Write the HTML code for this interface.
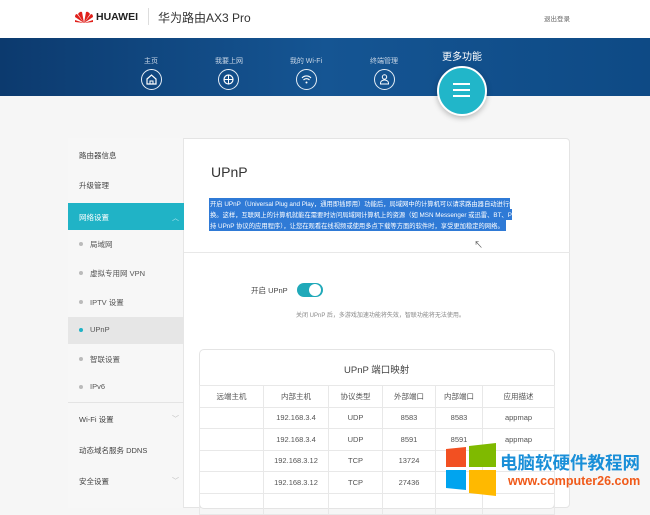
<!DOCTYPE html><html><head><meta charset="utf-8"><style>
*{margin:0;padding:0;box-sizing:border-box}
body{width:650px;height:501px;overflow:hidden;background:#f6f6f6;font-family:"Liberation Sans","Noto Sans CJK SC",sans-serif;color:#333;position:relative}
.a{position:absolute;white-space:nowrap}
.hdr{position:absolute;left:0;top:0;width:650px;height:38px;background:#fff}
.band{position:absolute;left:0;top:38px;width:650px;height:58px;background:linear-gradient(90deg,#0c3a6e,#155593 50%,#0e4a85)}
.nav{position:absolute;top:56px;font-size:7px;color:#c8d6e6;text-align:center;width:40px}
.ic{position:absolute;top:69px;width:21px;height:21px;border:1.3px solid #e6eef6;border-radius:50%}
.card{position:absolute;left:68px;top:138px;width:502px;height:370px;background:#fff;border:1px solid #e4e4e4;border-radius:4px}
.side{position:absolute;left:68px;top:138px;width:116px;height:370px;background:#f7f7f7;border-right:1px solid #e6e6e6}
.si{position:absolute;left:79px;font-size:7.5px;color:#444}
.sub{position:absolute;left:90px;font-size:7.5px;color:#555}
.dot{position:absolute;left:79px;width:4px;height:4px;border-radius:50%;background:#bbb}
table{position:absolute;left:199px;top:385px;border-collapse:collapse;font-size:7.5px;color:#555}
td{border:1px solid #e8e8e8;height:21.5px;text-align:center}
</style></head><body>
<div class="hdr"></div>
<svg class="a" style="left:74px;top:10px" width="20" height="14" viewBox="0 0 20 14"><g fill="#e0201b"><path d="M10 13 L4 4 Q6 1 8 2Z"/><path d="M10 13 L16 4 Q14 1 12 2Z"/><path d="M10 13 L1 7 Q1 4 3 4Z"/><path d="M10 13 L19 7 Q19 4 17 4Z"/><path d="M10 13 L1 10 L1 12Z"/><path d="M10 13 L19 10 L19 12Z"/></g></svg>
<div class="a" style="left:96px;top:11px;font-size:10.5px;font-weight:bold;color:#222">HUAWEI</div>
<div class="a" style="left:148px;top:8px;width:1px;height:17px;background:#ddd"></div>
<div class="a" style="left:158px;top:9px;font-size:12px;color:#333">华为路由AX3 Pro</div>
<div class="a" style="left:544px;top:13px;font-size:6.5px;color:#666">退出登录</div>
<div class="band"></div>
<div class="nav" style="left:131px">主页</div>
<div class="nav" style="left:209px">我要上网</div>
<div class="nav" style="left:286px">我的 Wi-Fi</div>
<div class="nav" style="left:364px">终端管理</div>
<div class="a" style="left:442px;top:48px;font-size:10px;color:#fff">更多功能</div>
<div class="ic" style="left:141px"><svg width="19" height="19" viewBox="0 0 19 19"><path d="M5 9 L9.5 5 L14 9 V14 H5Z" fill="none" stroke="#fff" stroke-width="1.2"/><path d="M8 14v-3h3v3" fill="none" stroke="#fff" stroke-width="1"/></svg></div>
<div class="ic" style="left:218px"><svg width="19" height="19" viewBox="0 0 19 19"><circle cx="9.5" cy="9.5" r="4.5" fill="none" stroke="#fff" stroke-width="1.2"/><path d="M5 9.5h9M9.5 5v9" stroke="#fff"/></svg></div>
<div class="ic" style="left:296px"><svg width="19" height="19" viewBox="0 0 19 19"><path d="M5 8a6 6 0 0 1 9 0M6.5 10a4 4 0 0 1 6 0" fill="none" stroke="#fff" stroke-width="1.1"/><circle cx="9.5" cy="12.5" r="1" fill="#fff"/></svg></div>
<div class="ic" style="left:374px"><svg width="19" height="19" viewBox="0 0 19 19"><circle cx="9.5" cy="7" r="2.2" fill="none" stroke="#fff"/><path d="M5.5 14v-1a4 3 0 0 1 8 0v1z" fill="none" stroke="#fff"/></svg></div>
<div class="a" style="left:437px;top:66px;width:50px;height:50px;border-radius:50%;background:#21b6c9;border:2px solid #fff;box-shadow:0 2px 6px rgba(0,0,0,.25)"></div>
<div class="a" style="left:453px;top:83px;width:17px;height:2px;background:#fff;box-shadow:0 6px 0 #fff,0 12px 0 #fff"></div>
<div class="card"></div>
<div class="side"></div>
<div class="si" style="top:150px">路由器信息</div>
<div class="si" style="top:180px">升级管理</div>
<div class="a" style="left:68px;top:203px;width:116px;height:27px;background:#20b3c6"></div>
<div class="si" style="top:212px;color:#fff">网络设置</div>
<div class="a" style="left:172px;top:213px;font-size:7px;color:#bfeaf0">︿</div>
<div class="dot" style="top:242px"></div><div class="sub" style="top:239px">局域网</div>
<div class="dot" style="top:271px"></div><div class="sub" style="top:268px">虚拟专用网 VPN</div>
<div class="dot" style="top:300px"></div><div class="sub" style="top:297px">IPTV 设置</div>
<div class="a" style="left:68px;top:317px;width:116px;height:27px;background:#e6e6e6"></div>
<div class="dot" style="top:328px;background:#20b3c6"></div><div class="sub" style="top:325px">UPnP</div>
<div class="dot" style="top:357px"></div><div class="sub" style="top:354px">智联设置</div>
<div class="dot" style="top:385px"></div><div class="sub" style="top:382px">IPv6</div>
<div class="a" style="left:68px;top:402px;width:116px;height:1px;background:#e4e4e4"></div>
<div class="si" style="top:414px">Wi-Fi 设置</div><div class="a" style="left:172px;top:414px;font-size:7px;color:#bbb">﹀</div>
<div class="si" style="top:445px">动态域名服务 DDNS</div>
<div class="si" style="top:476px">安全设置</div><div class="a" style="left:172px;top:476px;font-size:7px;color:#bbb">﹀</div>
<div class="a" style="left:211px;top:164px;font-size:14px;color:#333">UPnP</div>
<div class="a" style="left:209px;top:198px;width:301px;height:11px;background:#2f7ad6"></div>
<div class="a" style="left:209px;top:209px;width:303px;height:11px;background:#2f7ad6"></div>
<div class="a" style="left:209px;top:220px;width:297px;height:11px;background:#2f7ad6"></div>
<div class="a" style="left:210px;top:199px;font-size:6.3px;line-height:11px;color:#fff">开启 UPnP（Universal Plug and Play，通用即插即用）功能后，局域网中的计算机可以请求路由器自动进行端口转<br>换。这样，互联网上的计算机就能在需要时访问局域网计算机上的资源（如 MSN Messenger 或迅雷、BT、PPS等支<br>持 UPnP 协议的应用程序），让您在观看在线视频或使用多点下载等方面的软件时，享受更加稳定的网络。</div>
<div class="a" style="left:474px;top:238px;font-size:9px;color:#555">↖</div>
<div class="a" style="left:184px;top:252px;width:386px;height:1px;background:#e8e8e8"></div>
<div class="a" style="left:251px;top:285px;font-size:7.5px;color:#444">开启 UPnP</div>
<div class="a" style="left:297px;top:283px;width:26px;height:14px;border-radius:7px;background:#20a9b9"></div>
<div class="a" style="left:309px;top:284px;width:12px;height:12px;border-radius:50%;background:#fff"></div>
<div class="a" style="left:296px;top:310px;font-size:6px;color:#888">关闭 UPnP 后，多游戏加速功能将失效，智联功能将无法使用。</div>
<div class="a" style="left:199px;top:349px;width:356px;height:160px;border:1px solid #e4e4e4;border-radius:5px;background:#fff"></div>
<div class="a" style="left:344px;top:362px;font-size:9.5px;color:#444">UPnP 端口映射</div>
<table>
<tr><td style="width:64px">远端主机</td><td style="width:65px">内部主机</td><td style="width:54px">协议类型</td><td style="width:53px">外部端口</td><td style="width:47px">内部端口</td><td style="width:72px">应用描述</td></tr>
<tr><td></td><td>192.168.3.4</td><td>UDP</td><td>8583</td><td>8583</td><td>appmap</td></tr>
<tr><td></td><td>192.168.3.4</td><td>UDP</td><td>8591</td><td>8591</td><td>appmap</td></tr>
<tr><td></td><td>192.168.3.12</td><td>TCP</td><td>13724</td><td></td><td></td></tr>
<tr><td></td><td>192.168.3.12</td><td>TCP</td><td>27436</td><td></td><td></td></tr>
<tr><td></td><td></td><td></td><td></td><td></td><td></td></tr>
</table>
<svg class="a" style="left:446px;top:443px" width="52" height="53" viewBox="0 0 52 53"><path d="M0 6 L20 4 V24 H0Z" fill="#f25022"/><path d="M23 3 L50 0 V24 H23Z" fill="#7fba00"/><path d="M0 27 H20 V47 L0 45Z" fill="#00a4ef"/><path d="M23 27 H50 V53 L23 50Z" fill="#ffb900"/></svg>
<div class="a" style="left:500px;top:450px;font-size:17.5px;font-weight:bold;color:#1a8fd8">电脑软硬件教程网</div>
<div class="a" style="left:508px;top:474px;font-size:12.5px;font-weight:bold;color:#f05a1a">www.computer26.com</div>
</body></html>
